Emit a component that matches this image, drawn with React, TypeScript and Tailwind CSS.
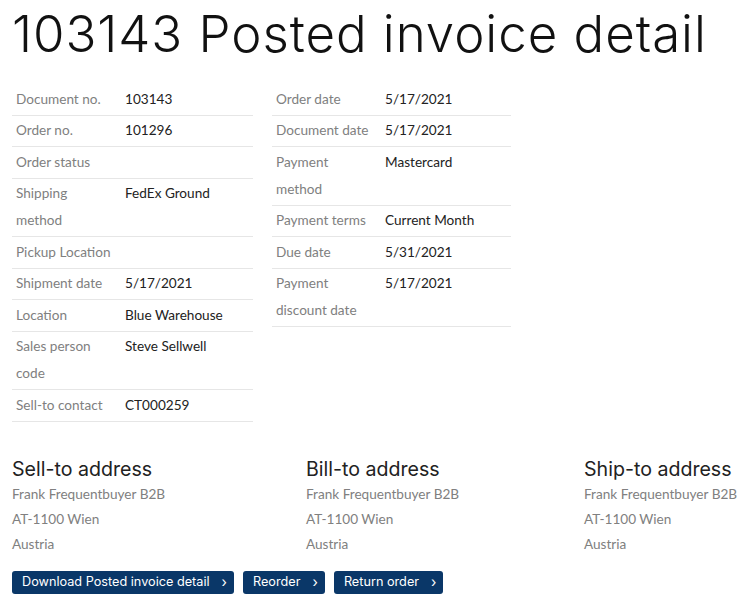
import React from 'react';

type Row = { label: string; value?: string };

const LEFT_ROWS: Row[] = [
  { label: 'Document no.', value: '103143' },
  { label: 'Order no.', value: '101296' },
  { label: 'Order status' },
  { label: 'Shipping method', value: 'FedEx Ground' },
  { label: 'Pickup Location' },
  { label: 'Shipment date', value: '5/17/2021' },
  { label: 'Location', value: 'Blue Warehouse' },
  { label: 'Sales person code', value: 'Steve Sellwell' },
  { label: 'Sell-to contact', value: 'CT000259' },
];

const RIGHT_ROWS: Row[] = [
  { label: 'Order date', value: '5/17/2021' },
  { label: 'Document date', value: '5/17/2021' },
  { label: 'Payment method', value: 'Mastercard' },
  { label: 'Payment terms', value: 'Current Month' },
  { label: 'Due date', value: '5/31/2021' },
  { label: 'Payment discount date', value: '5/17/2021' },
];

const ADDRESSES = [
  { title: 'Sell-to address', width: 'w-[294px]' },
  { title: 'Bill-to address', width: 'w-[278px]' },
  { title: 'Ship-to address', width: 'w-[160px]' },
];

const heading = "font-['Inter',sans-serif]";
const body = "font-['Lato',sans-serif]";

function DetailTable({ rows, width }: { rows: Row[]; width: string }) {
  return (
    <table className={`${width} table-fixed border-collapse text-[13.6px] leading-[27px]`}>
      <tbody>
        {rows.map((row) => (
          <tr key={row.label} className="border-b border-[#e6e6e6] align-top">
            <td className="w-[109px] pl-1 pr-[9px] py-[1.75px] text-[#808080]">{row.label}</td>
            <td className="pl-1 py-[1.75px] text-[#222]">{row.value ?? ''}</td>
          </tr>
        ))}
      </tbody>
    </table>
  );
}

function ActionButton({ children }: { children: React.ReactNode }) {
  return (
    <button
      className={`${heading} flex h-[23px] items-center gap-[12px] rounded-[3px] bg-[#0a3768] pl-[10px] pr-[7px] text-[12.7px] text-white`}
    >
      <span>{children}</span>
      <span className="text-[14px] leading-none">›</span>
    </button>
  );
}

export default function App() {
  return (
    <div className={`${body} min-h-screen bg-white px-3 text-[#222]`}>
      <h1 className={`${heading} pt-[6px] text-[51px] font-light leading-[56px] tracking-[0.95px] text-[#111]`}>
        103143 Posted invoice detail
      </h1>

      <div className="mt-[22px] flex items-start gap-[19px]">
        <DetailTable rows={LEFT_ROWS} width="w-[241px]" />
        <DetailTable rows={RIGHT_ROWS} width="w-[239px]" />
      </div>

      <div className="mt-[34px] flex">
        {ADDRESSES.map((a) => (
          <div key={a.title} className={`${a.width} shrink-0`}>
            <h2 className={`${heading} text-[19.6px] leading-[26px] text-[#222]`}>{a.title}</h2>
            <div className="text-[13.6px] leading-[25px] text-[#808080]">
              <p>Frank Frequentbuyer B2B</p>
              <p>AT-1100 Wien</p>
              <p>Austria</p>
            </div>
          </div>
        ))}
      </div>

      <div className="mt-[14px] flex gap-[9px]">
        <ActionButton>Download Posted invoice detail</ActionButton>
        <ActionButton>Reorder</ActionButton>
        <ActionButton>Return order</ActionButton>
      </div>
    </div>
  );
}
